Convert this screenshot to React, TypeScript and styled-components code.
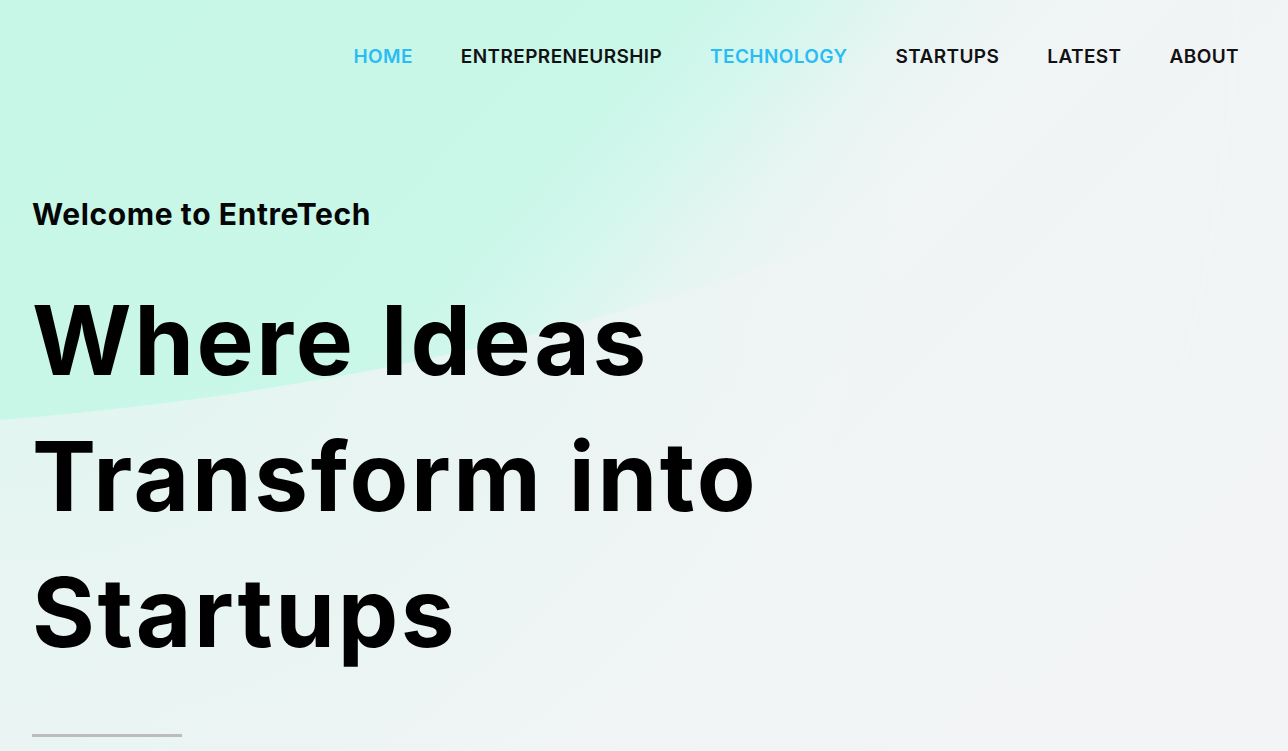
import React from "react";
import styled, { createGlobalStyle } from "styled-components";

const Global = createGlobalStyle`
  html, body { margin: 0; padding: 0; }
  body { font-family: Inter, "Liberation Sans", sans-serif; background: #f2f4f5; }
  * { box-sizing: border-box; }
`;

const Page = styled.div`
  position: relative;
  min-height: 100vh;
  overflow: hidden;
  background:
    radial-gradient(ellipse 900px 700px at 0% 35%, #dcf6ef 0%, #e8f5f2 45%, rgba(242, 244, 245, 0) 100%),
    linear-gradient(135deg, #e4f6f1 0%, #f1f4f5 60%, #f2f4f6 100%);
`;

const Blob = styled.div`
  position: absolute;
  left: -2075px;
  top: -1232px;
  width: 3550px;
  height: 1664px;
  border-radius: 50%;
  background: linear-gradient(
      132deg,
      #c7f7e7 0%,
      #c9f7e8 35%,
      rgba(206, 247, 235, 0.8) 41%,
      rgba(220, 246, 240, 0.4) 47%,
      rgba(230, 245, 241, 0) 54%
    )
    fixed;
  pointer-events: none;
`;

const Arc = styled.div`
  position: absolute;
  left: 380px;
  top: -900px;
  width: 860px;
  height: 1700px;
  border-radius: 50%;
  border-right: 5px solid rgba(255, 255, 255, 0.18);
  filter: blur(3px);
  pointer-events: none;
`;

const Content = styled.div`
  position: relative;
  display: flex;
  flex-direction: column;
  padding: 0 49px 0 32px;
`;

const Nav = styled.nav`
  display: flex;
  justify-content: flex-end;
  gap: 48px;
  padding-top: 45px;
  height: 82px;
`;

const NavLink = styled.a<{ $active?: boolean }>`
  font-family: Inter, "Liberation Sans", sans-serif;
  font-size: 19px;
  font-weight: 600;
  line-height: 24px;
  letter-spacing: 0.4px;
  color: ${(p) => (p.$active ? "#2bbcf5" : "#111114")};
  text-decoration: none;
`;

const Welcome = styled.p`
  margin: 114px 0 0;
  font-size: 30px;
  font-weight: 700;
  line-height: 36px;
  color: #050505;
  letter-spacing: 0.6px;
`;

const Title = styled.h1`
  margin: 40px 0 0;
  font-size: 96px;
  font-weight: 700;
  line-height: 136px;
  letter-spacing: 2.6px;
  color: #000;
  max-width: 820px;
`;

const Rule = styled.div`
  margin-top: 54px;
  width: 150px;
  height: 3px;
  background: #bcbcbc;
`;

const links = [
  { label: "HOME", active: true },
  { label: "ENTREPRENEURSHIP" },
  { label: "TECHNOLOGY", active: true },
  { label: "STARTUPS" },
  { label: "LATEST" },
  { label: "ABOUT" },
];

export default function App() {
  return (
    <Page>
      <Global />
      <Blob />
      <Arc />
      <Content>
        <Nav>
          {links.map((l) => (
            <NavLink key={l.label} href="#" $active={l.active}>
              {l.label}
            </NavLink>
          ))}
        </Nav>
        <Welcome>Welcome to EntreTech</Welcome>
        <Title>
          Where Ideas
          <br />
          Transform into
          <br />
          Startups
        </Title>
        <Rule />
      </Content>
    </Page>
  );
}
